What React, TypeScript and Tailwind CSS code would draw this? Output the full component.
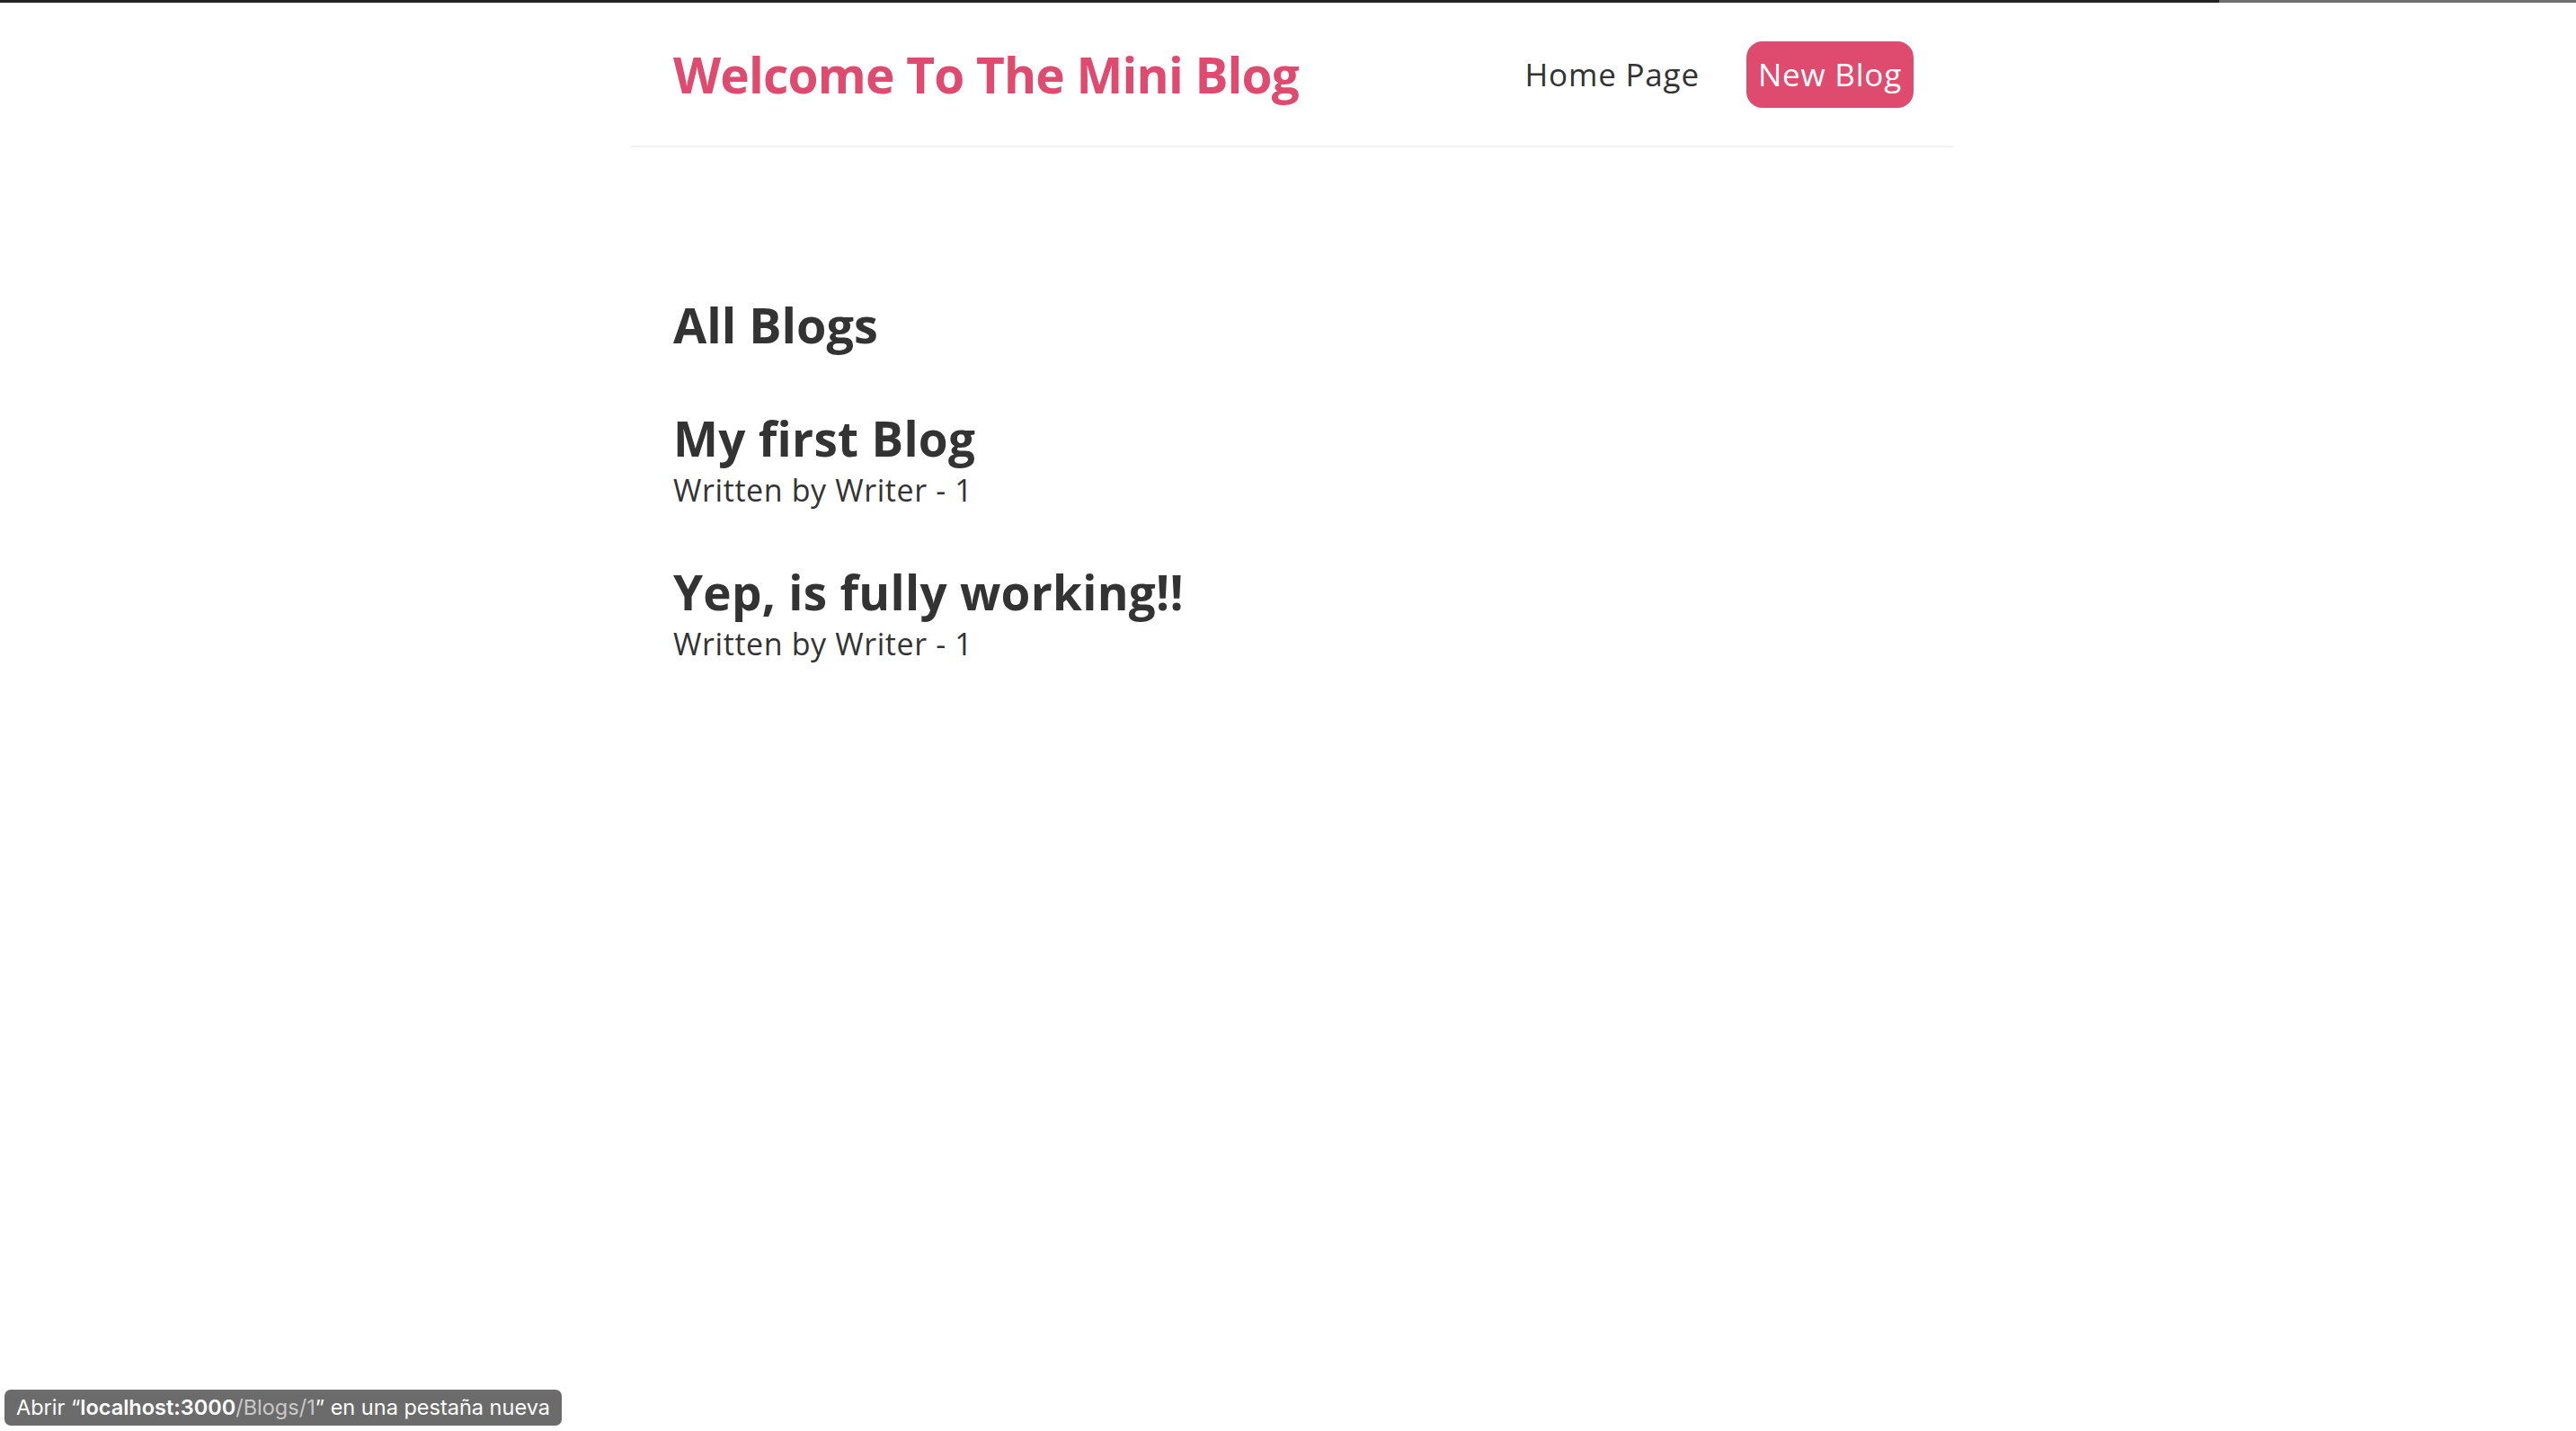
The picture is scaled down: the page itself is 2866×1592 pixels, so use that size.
import React from "react";

const blogs = [
  { id: 1, title: "My first Blog", author: "Writer - 1" },
  { id: 2, title: "Yep, is fully working!!", author: "Writer - 1" },
];

function Navbar() {
  return (
    <nav className="mx-auto flex h-[161px] w-[1471px] items-center border-b-2 border-[#f2f2f2] pl-[47px] pr-[44px]">
      <h1 className="text-[55px] font-bold leading-none tracking-[-0.8px] text-[#df4a6f]">Welcome To The Mini Blog</h1>
      <div className="ml-auto flex items-center">
        <a href="/" className="text-[35px] leading-none tracking-[0.8px] text-[#333333]">
          Home Page
        </a>
        <a
          href="/create"
          className="ml-[52px] flex h-[74px] items-center rounded-[18px] bg-[#df4a6f] px-[13px] text-[35px] leading-none tracking-[0.8px] text-white"
        >
          New Blog
        </a>
      </div>
    </nav>
  );
}

function BlogList() {
  return (
    <div className="mt-[73px] flex flex-col gap-[70px]">
      {blogs.map((blog) => (
        <div key={blog.id} className="flex flex-col gap-[14px]">
          <h2 className="text-[53px] font-bold leading-none tracking-[0.3px] text-[#333333]">{blog.title}</h2>
          <p className="text-[34px] leading-none tracking-[0.6px] text-[#333333]">Written by {blog.author}</p>
        </div>
      ))}
    </div>
  );
}

export default function App() {
  return (
    <div className="relative h-[1592px] w-full overflow-hidden bg-white" style={{ fontFamily: "'Open Sans', 'Noto Sans', sans-serif" }}>
      <div className="flex h-[3px]">
        <div className="flex-1 bg-[#232323]" />
        <div className="w-[397px] bg-[#6e6e6e]" />
      </div>
      <div className="pl-[9px]">
        <Navbar />
        <main className="mx-auto w-[1471px] pl-[47px] pr-[44px] pt-[170px]">
          <h2 className="text-[54px] font-bold leading-none text-[#333333]">All Blogs</h2>
          <BlogList />
        </main>
      </div>
      <div
        className="absolute bottom-[6px] left-[5px] flex h-[40px] w-[620px] items-center rounded-[7px] bg-[#6b6b6b] pl-[13px] text-[23.5px] leading-none text-white"
        style={{ fontFamily: "Inter, 'Liberation Sans', sans-serif" }}
      >
        <span className="whitespace-nowrap">
          Abrir “<span className="font-semibold">localhost:3000</span>
          <span className="text-[#c9c9c9]">/Blogs/1</span>” en una pestaña nueva
        </span>
      </div>
    </div>
  );
}
